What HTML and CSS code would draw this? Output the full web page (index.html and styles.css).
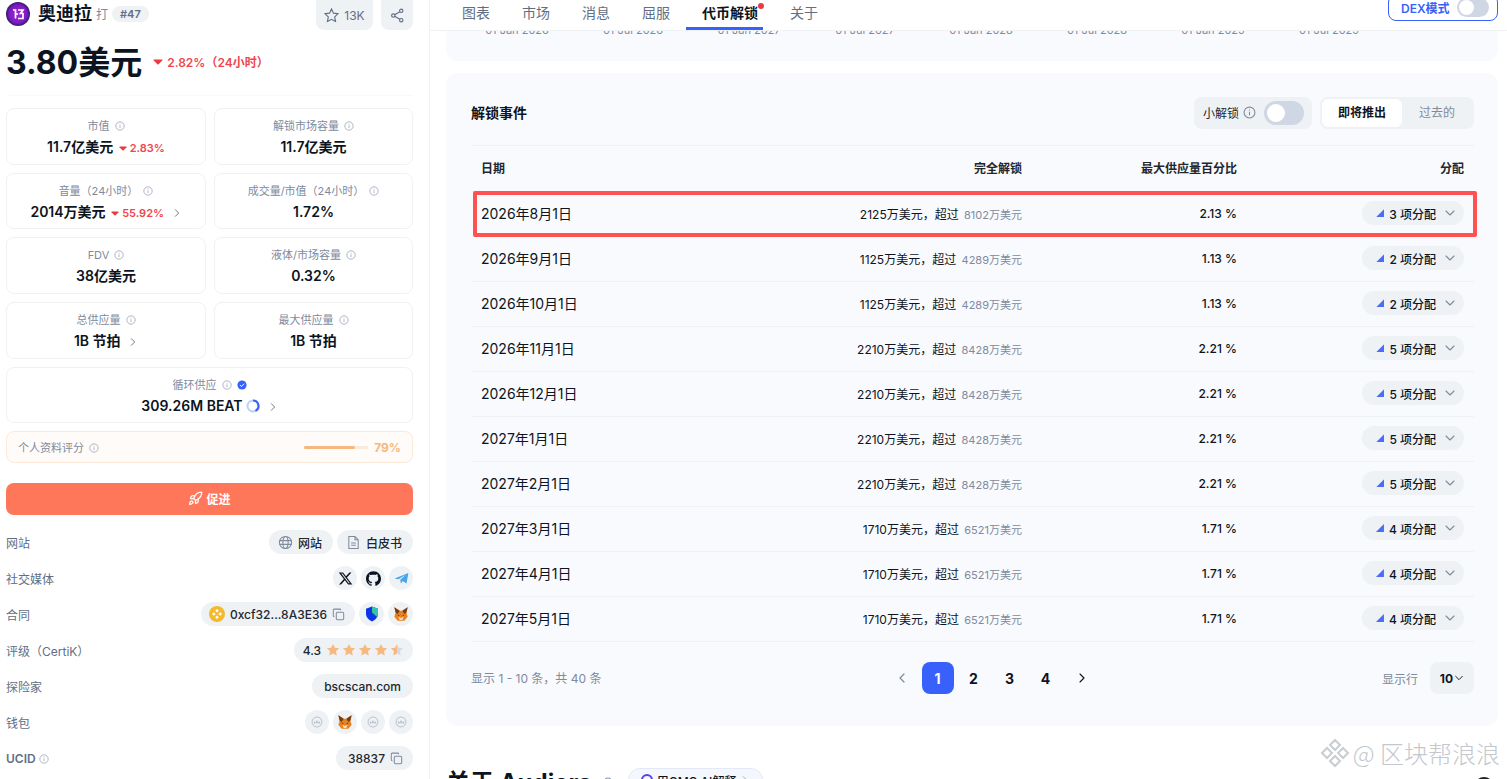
FILE: index.html
```html
<!DOCTYPE html>
<html lang="zh-CN">
<head>
<meta charset="utf-8">
<title>奥迪拉 代币解锁</title>
<link rel="stylesheet" href="styles.css">
</head>
<body>
<svg class="sprite" aria-hidden="true">
  <symbol id="i-info" viewBox="0 0 12 12"><circle cx="6" cy="6" r="5" fill="none" stroke="currentColor"/><path d="M6 5.2v3.4M6 3.2v1" fill="none" stroke="currentColor"/></symbol>
  <symbol id="i-right" viewBox="0 0 12 12"><path d="M4 2l4 4-4 4" fill="none" stroke="currentColor" stroke-width="1.1" stroke-linecap="round" stroke-linejoin="round"/></symbol>
  <symbol id="i-left" viewBox="0 0 12 12"><path d="M8 2L4 6l4 4" fill="none" stroke="currentColor" stroke-width="1.2" stroke-linecap="round" stroke-linejoin="round"/></symbol>
  <symbol id="i-down" viewBox="0 0 12 12"><path d="M2 4l4 4 4-4" fill="none" stroke="currentColor" stroke-width="1.1" stroke-linecap="round" stroke-linejoin="round"/></symbol>
  <symbol id="i-tri" viewBox="0 0 10 6"><path d="M1 .5h8a.5.5 0 0 1 .4.8L5.4 5.4a.6.6 0 0 1-.8 0L.6 1.3A.5.5 0 0 1 1 .5z" fill="currentColor"/></symbol>
  <symbol id="i-copy" viewBox="0 0 14 14"><rect x="4.6" y="4.6" width="8" height="8" rx="1.2" fill="none" stroke="currentColor" stroke-width="1.1"/><path d="M9.4 2.4V2.2a1 1 0 0 0-1-1H2.4a1 1 0 0 0-1 1v6.2a1 1 0 0 0 1 1h.3" fill="none" stroke="currentColor" stroke-width="1.1"/></symbol>
  <symbol id="i-wallet" viewBox="0 0 16 16"><circle cx="8" cy="8" r="6.6" fill="none" stroke="currentColor" stroke-width=".9"/><path d="M4.6 10.2V7.6l2 2.2 1.5-3.5 1.5 3.5 1.9-2.2v2.6" fill="none" stroke="currentColor" stroke-width=".9"/></symbol>
  <symbol id="i-fox" viewBox="0 0 24 24"><path d="M2 2l8 5h4l8-5-2 8 2 6-5 6h-10l-5-6 2-6z" fill="#e8821e"/><path d="M2 2l8 5-3 5-3-2z" fill="#763d16"/><path d="M22 2l-8 5 3 5 3-2z" fill="#763d16"/><path d="M8 16l4 2 4-2-2 5h-4z" fill="#f5ddc8"/><path d="M7 13l3 1-2 1zM17 13l-3 1 2 1z" fill="#233447"/></symbol>
  <symbol id="i-star" viewBox="0 0 16 16"><path d="M8 1l2.1 4.5 4.9.6-3.6 3.4.9 4.9L8 12.1l-4.3 2.3.9-4.9L1 6.1l4.9-.6z"/></symbol>
</svg>

<aside class="side">
  <header class="coin-head">
    <svg class="coin-logo" viewBox="0 0 24 24"><defs><radialGradient id="lg"><stop offset="0" stop-color="#a722dc"/><stop offset=".75" stop-color="#7a1cc0"/><stop offset="1" stop-color="#2f1a66"/></radialGradient></defs><circle cx="12" cy="12" r="12" fill="url(#lg)"/><path d="M7 8h2.500v8.500M12 8h5l-2.500 3.500h2.500v5h-5M9.500 12h2.500" fill="none" stroke="#fff" stroke-width="1.700"/></svg>
    <span class="coin-name">奥迪拉</span>
    <span class="coin-sym">打</span>
    <span class="coin-rank">#47</span>
    <span class="head-actions">
      <span class="square-btn wide"><svg class="ic14" viewBox="0 0 16 16"><use href="#i-star" fill="none" stroke="currentColor" stroke-width="1.200"/></svg>13K</span>
      <span class="square-btn"><svg class="ic14" viewBox="0 0 16 16"><circle cx="12" cy="3" r="1.800" fill="none" stroke="currentColor" stroke-width="1.200"/><circle cx="3.500" cy="8" r="1.800" fill="none" stroke="currentColor" stroke-width="1.200"/><circle cx="12" cy="13" r="1.800" fill="none" stroke="currentColor" stroke-width="1.200"/><path d="M5 7.100l5.500-3.200M5 8.900l5.500 3.200" stroke="currentColor" stroke-width="1.200"/></svg></span>
    </span>
  </header>

  <div class="price-row">
    <span class="price">3.80美元</span>
    <svg class="tri" viewBox="0 0 10 6"><use href="#i-tri"/></svg>
    <span class="price-change">2.82%（24小时）</span>
  </div>

  <div class="stats">
    <div class="stat"><div class="stat-label">市值 <svg class="ic10"><use href="#i-info"/></svg></div><div class="stat-value">11.7亿美元 <svg class="tri-sm" viewBox="0 0 10 6"><use href="#i-tri"/></svg><span class="neg">2.83%</span></div></div>
    <div class="stat"><div class="stat-label">解锁市场容量 <svg class="ic10"><use href="#i-info"/></svg></div><div class="stat-value">11.7亿美元</div></div>
    <div class="stat"><div class="stat-label">音量（24小时） <svg class="ic10"><use href="#i-info"/></svg></div><div class="stat-value">2014万美元 <svg class="tri-sm" viewBox="0 0 10 6"><use href="#i-tri"/></svg><span class="neg">55.92%</span> <svg class="ic10 chev"><use href="#i-right"/></svg></div></div>
    <div class="stat"><div class="stat-label">成交量/市值（24小时） <svg class="ic10"><use href="#i-info"/></svg></div><div class="stat-value">1.72%</div></div>
    <div class="stat"><div class="stat-label">FDV <svg class="ic10"><use href="#i-info"/></svg></div><div class="stat-value">38亿美元</div></div>
    <div class="stat"><div class="stat-label">液体/市场容量 <svg class="ic10"><use href="#i-info"/></svg></div><div class="stat-value">0.32%</div></div>
    <div class="stat"><div class="stat-label">总供应量 <svg class="ic10"><use href="#i-info"/></svg></div><div class="stat-value">1B 节拍 <svg class="ic10 chev"><use href="#i-right"/></svg></div></div>
    <div class="stat"><div class="stat-label">最大供应量 <svg class="ic10"><use href="#i-info"/></svg></div><div class="stat-value">1B 节拍</div></div>
    <div class="stat span2"><div class="stat-label">循环供应 <svg class="ic10"><use href="#i-info"/></svg> <svg class="ic10" viewBox="0 0 12 12"><circle cx="6" cy="6" r="5.500" fill="#3861fb"/><path d="M3.500 6l1.800 1.800 3.200-3.300" fill="none" stroke="#fff" stroke-width="1.200"/></svg></div><div class="stat-value">309.26M BEAT <svg class="ring" viewBox="0 0 14 14"><circle cx="7" cy="7" r="5.500" fill="none" stroke="#bcd0fb" stroke-width="2"/><path d="M7 1.500A5.500 5.500 0 0 1 9.500 11.900" fill="none" stroke="#3861fb" stroke-width="2"/></svg> <svg class="ic10 chev"><use href="#i-right"/></svg></div></div>
  </div>

  <div class="score">
    <span class="score-label">个人资料评分 <svg class="ic10"><use href="#i-info"/></svg></span>
    <span class="score-bar"><span class="score-fill"></span></span>
    <span class="score-val">79%</span>
  </div>

  <button class="boost"><svg class="ic14" viewBox="0 0 24 24" fill="none" stroke="#fff" stroke-width="2" stroke-linecap="round" stroke-linejoin="round"><path d="M4.500 16.500c-1.500 1.260-2 5-2 5s3.740-.5 5-2c.71-.84.700-2.130-.09-2.910a2.180 2.180 0 0 0-2.910-.09z"/><path d="M12 15l-3-3a22 22 0 0 1 2-3.950A12.880 12.880 0 0 1 22 2c0 2.720-.78 7.500-6 11a22.350 22.350 0 0 1-4 2z"/><path d="M9 12H4s.55-3.030 2-4c1.620-1.080 5 0 5 0M12 15v5s3.030-.55 4-2c1.080-1.620 0-5 0-5"/></svg>促进</button>

  <dl class="info">
    <div class="info-row"><dt>网站</dt><dd><span class="pill icon-pill"><svg class="ic15" viewBox="0 0 16 16" fill="none" stroke="#808a9d" stroke-width="1.100"><circle cx="8" cy="8" r="6.500"/><ellipse cx="8" cy="8" rx="2.800" ry="6.500"/><path d="M1.500 6h13M1.500 10h13"/></svg>网站</span><span class="pill icon-pill"><svg class="ic15" viewBox="0 0 16 16" fill="none" stroke="#808a9d" stroke-width="1.100"><path d="M3 1.500h6.500L13 5v9.500H3zM9.500 1.500V5H13M5.500 8.500h5M5.500 11h5"/></svg>白皮书</span></dd></div>
    <div class="info-row"><dt>社交媒体</dt><dd>
      <span class="round"><svg class="ic14" viewBox="0 0 24 24"><path fill="#0d1421" d="M18.244 2.250h3.308l-7.227 8.260 8.502 11.240H16.170l-5.214-6.817L4.990 21.750H1.680l7.730-8.835L1.254 2.250H8.080l4.713 6.231zm-1.161 17.520h1.833L7.084 4.126H5.117z"/></svg></span>
      <span class="round"><svg class="ic14" viewBox="0 0 24 24"><path fill="#0d1421" d="M12 .297c-6.630 0-12 5.373-12 12 0 5.303 3.438 9.800 8.205 11.385.6.113.82-.258.82-.577 0-.285-.01-1.040-.015-2.040-3.338.724-4.042-1.610-4.042-1.610C4.422 18.070 3.633 17.700 3.633 17.700c-1.087-.744.084-.729.084-.729 1.205.084 1.838 1.236 1.838 1.236 1.070 1.835 2.809 1.305 3.495.998.108-.776.417-1.305.76-1.605-2.665-.3-5.466-1.332-5.466-5.930 0-1.310.465-2.380 1.235-3.220-.135-.303-.54-1.523.105-3.176 0 0 1.005-.322 3.300 1.230.96-.267 1.980-.399 3-.405 1.020.006 2.040.138 3 .405 2.280-1.552 3.285-1.230 3.285-1.230.645 1.653.24 2.873.12 3.176.765.84 1.230 1.910 1.230 3.220 0 4.610-2.805 5.625-5.475 5.920.42.36.81 1.096.81 2.220 0 1.606-.015 2.896-.015 3.286 0 .315.21.69.825.57C20.565 22.092 24 17.592 24 12.297c0-6.627-5.373-12-12-12"/></svg></span>
      <span class="round"><svg class="ic14" viewBox="0 0 24 24"><path fill="#44a5ec" d="M1 12L23 3l-3 17-6-4-3 4-1-6 9-8-12 7z"/></svg></span>
    </dd></div>
    <div class="info-row"><dt>合同</dt><dd class="contract">
      <span class="pill addr"><svg class="ic16" viewBox="0 0 16 16"><circle cx="8" cy="8" r="8" fill="#f3ba2f"/><path d="M8 3l1.800 1.800L8 6.600 6.200 4.800zM4.800 6.200L6.600 8 4.800 9.800 3 8zM11.200 6.200L13 8l-1.800 1.800L9.400 8zM8 9.400l1.800 1.800L8 13l-1.800-1.800z" fill="#fff"/></svg>0xcf32...8A3E36<svg class="ic13 muted" viewBox="0 0 14 14"><use href="#i-copy"/></svg></span>
      <span class="round"><svg class="ic16" viewBox="0 0 16 16"><path d="M8 .5l6 2.200v5c0 3.500-2.500 6-6 7.800-3.500-1.800-6-4.300-6-7.800v-5z" fill="#0c35e8"/><path d="M8 .5l6 2.200v5c0 1.200-.3 2.300-.9 3.300L8 6.500z" fill="#35c4a5"/></svg></span>
      <span class="round"><svg class="ic16" viewBox="0 0 24 24"><use href="#i-fox"/></svg></span>
    </dd></div>
    <div class="info-row"><dt>评级（CertiK）</dt><dd><span class="pill rating">4.3 <span class="stars"><svg class="star"><use href="#i-star"/></svg><svg class="star"><use href="#i-star"/></svg><svg class="star"><use href="#i-star"/></svg><svg class="star"><use href="#i-star"/></svg><svg class="star half" viewBox="0 0 16 16"><defs><linearGradient id="hf"><stop offset=".5" stop-color="#f6b87e"/><stop offset=".5" stop-color="#d5dbe5"/></linearGradient></defs><path fill="url(#hf)" d="M8 1l2.100 4.500 4.900.6-3.600 3.400.9 4.900L8 12.100l-4.300 2.300.9-4.900L1 6.100l4.900-.6z"/></svg></span></span></dd></div>
    <div class="info-row"><dt>探险家</dt><dd><span class="pill link">bscscan.com</span></dd></div>
    <div class="info-row"><dt>钱包</dt><dd>
      <span class="round light"><svg class="ic12"><use href="#i-wallet"/></svg></span>
      <span class="round"><svg class="ic16" viewBox="0 0 24 24"><use href="#i-fox"/></svg></span>
      <span class="round light"><svg class="ic12"><use href="#i-wallet"/></svg></span>
      <span class="round light"><svg class="ic12"><use href="#i-wallet"/></svg></span>
    </dd></div>
    <div class="info-row"><dt class="ucid">UCID <svg class="ic10"><use href="#i-info"/></svg></dt><dd><span class="pill link">38837<svg class="ic13 muted tail" viewBox="0 0 14 14"><use href="#i-copy"/></svg></span></dd></div>
  </dl>
</aside>

<main class="main">
  <nav class="tabs">
    <a class="tab">图表</a>
    <a class="tab">市场</a>
    <a class="tab">消息</a>
    <a class="tab">屈服</a>
    <a class="tab active">代币解锁<i class="dot"></i></a>
    <a class="tab">关于</a>
    <span class="dex"><span class="dex-label">DEX模式</span><span class="toggle small"><i></i></span></span>
  </nav>

  <section class="card chart-card">
    <div class="axis">
      <span>01 Jan 2026</span><span>01 Jul 2026</span><span>01 Jan 2027</span><span>01 Jul 2027</span><span>01 Jan 2028</span><span>01 Jul 2028</span><span>01 Jan 2029</span><span>01 Jul 2029</span>
    </div>
  </section>

  <section class="card events">
    <div class="events-head">
      <h2 class="events-title">解锁事件</h2>
      <div class="mini-unlock">小解锁 <svg class="ic13 muted"><use href="#i-info"/></svg><span class="toggle"><i></i></span></div>
      <div class="segment"><span class="seg on">即将推出</span><span class="seg">过去的</span></div>
    </div>

    <div class="table">
      <div class="tr th"><span>日期</span><span class="r col-unlock">完全解锁</span><span class="r">最大供应量百分比</span><span class="r">分配</span></div>
      <div class="tr hl"><span class="date">2026年8月1日</span><span class="r col-unlock">2125万美元，超过 <em>8102万美元</em></span><span class="r pct">2.13 %</span><span class="r"><span class="alloc"><i class="wedge"></i>3 项分配<svg class="ic12 muted"><use href="#i-down"/></svg></span></span></div>
      <div class="tr"><span class="date">2026年9月1日</span><span class="r col-unlock">1125万美元，超过 <em>4289万美元</em></span><span class="r pct">1.13 %</span><span class="r"><span class="alloc"><i class="wedge"></i>2 项分配<svg class="ic12 muted"><use href="#i-down"/></svg></span></span></div>
      <div class="tr"><span class="date">2026年10月1日</span><span class="r col-unlock">1125万美元，超过 <em>4289万美元</em></span><span class="r pct">1.13 %</span><span class="r"><span class="alloc"><i class="wedge"></i>2 项分配<svg class="ic12 muted"><use href="#i-down"/></svg></span></span></div>
      <div class="tr"><span class="date">2026年11月1日</span><span class="r col-unlock">2210万美元，超过 <em>8428万美元</em></span><span class="r pct">2.21 %</span><span class="r"><span class="alloc"><i class="wedge"></i>5 项分配<svg class="ic12 muted"><use href="#i-down"/></svg></span></span></div>
      <div class="tr"><span class="date">2026年12月1日</span><span class="r col-unlock">2210万美元，超过 <em>8428万美元</em></span><span class="r pct">2.21 %</span><span class="r"><span class="alloc"><i class="wedge"></i>5 项分配<svg class="ic12 muted"><use href="#i-down"/></svg></span></span></div>
      <div class="tr"><span class="date">2027年1月1日</span><span class="r col-unlock">2210万美元，超过 <em>8428万美元</em></span><span class="r pct">2.21 %</span><span class="r"><span class="alloc"><i class="wedge"></i>5 项分配<svg class="ic12 muted"><use href="#i-down"/></svg></span></span></div>
      <div class="tr"><span class="date">2027年2月1日</span><span class="r col-unlock">2210万美元，超过 <em>8428万美元</em></span><span class="r pct">2.21 %</span><span class="r"><span class="alloc"><i class="wedge"></i>5 项分配<svg class="ic12 muted"><use href="#i-down"/></svg></span></span></div>
      <div class="tr"><span class="date">2027年3月1日</span><span class="r col-unlock">1710万美元，超过 <em>6521万美元</em></span><span class="r pct">1.71 %</span><span class="r"><span class="alloc"><i class="wedge"></i>4 项分配<svg class="ic12 muted"><use href="#i-down"/></svg></span></span></div>
      <div class="tr"><span class="date">2027年4月1日</span><span class="r col-unlock">1710万美元，超过 <em>6521万美元</em></span><span class="r pct">1.71 %</span><span class="r"><span class="alloc"><i class="wedge"></i>4 项分配<svg class="ic12 muted"><use href="#i-down"/></svg></span></span></div>
      <div class="tr"><span class="date">2027年5月1日</span><span class="r col-unlock">1710万美元，超过 <em>6521万美元</em></span><span class="r pct">1.71 %</span><span class="r"><span class="alloc"><i class="wedge"></i>4 项分配<svg class="ic12 muted"><use href="#i-down"/></svg></span></span></div>
    </div>

    <footer class="pager-row">
      <span class="count">显示 1 - 10 条，共 40 条</span>
      <div class="pager">
        <span class="pg arrow off"><svg class="ic12"><use href="#i-left"/></svg></span>
        <span class="pg cur">1</span><span class="pg">2</span><span class="pg">3</span><span class="pg">4</span>
        <span class="pg arrow"><svg class="ic12"><use href="#i-right"/></svg></span>
      </div>
      <div class="per-page">显示行 <span class="select">10<svg class="ic10"><use href="#i-down"/></svg></span></div>
    </footer>
  </section>

  <section class="about">
    <h2 class="about-title">关于 Audiera</h2>
    <svg class="ic12 muted"><use href="#i-info"/></svg>
    <span class="ai-chip"><i class="ai-ring"></i>用CMC AI解释 <svg class="ic10"><use href="#i-right"/></svg></span>
    <i class="corner"></i>
  </section>
</main>

<div class="watermark">
  <svg class="wm-logo" viewBox="0 0 30 30" fill="none" stroke="#c9cdd2" stroke-width="2"><path d="M15 2l5 5-5 5-5-5zM7 10l5 5-5 5-5-5zM23 10l5 5-5 5-5-5zM15 18l5 5-5 5-5-5z"/></svg>
  <span>@ 区块帮浪浪</span>
</div>
</body>
</html>
```
FILE: styles.css
```css
* { box-sizing: border-box; }
html, body { margin: 0; height: 779px; overflow: hidden; }
body {
  position: relative;
  display: flex;
  width: 1507px;
  background: #fff;
  color: #0d1421;
  font-family: Inter, "Noto Sans CJK SC", "Liberation Sans", sans-serif;
  font-size: 12px;
}
.sprite { display: none; }
svg { flex: none; vertical-align: -1px; }
.ic10 { width: 10px; height: 10px; color: #a1a7bb; }
.ic12 { width: 12px; height: 12px; }
.ic13 { width: 13px; height: 13px; }
.ic14 { width: 15px; height: 15px; }
.ic15 { width: 15px; height: 15px; }
.ic16 { width: 16px; height: 16px; }
.muted { color: #808a9d; }
.chev { color: #616e85; margin-left: 4px; }

/* sidebar */
.side {
  width: 430px;
  flex: none;
  padding: 0 16px 0 6px;
  border-right: 1px solid #eff2f5;
}
.coin-head { display: flex; align-items: center; height: 30px; }
.coin-logo { width: 24px; height: 24px; margin: -3px 8px 0 0; }
.coin-name { font-size: 18px; line-height: 24px; font-weight: 600; margin-top: -3px; }
.coin-sym { margin: -3px 4px 0 4px; font-size: 12px; color: #808a9d; }
.coin-rank { margin-top: -3px; padding: 0 8px; height: 16px; line-height: 16px; border-radius: 8px; background: #eff2f5; color: #616e85; font-size: 11px; font-weight: 600; }
.head-actions { display: flex; gap: 8px; margin-left: auto; align-self: flex-start; }
.square-btn { display: flex; align-items: center; justify-content: center; gap: 5px; width: 32px; height: 30px; border-radius: 0 0 8px 8px; background: #eff2f5; color: #616e85; font-size: 12px; }
.square-btn.wide { width: 57px; }

.price-row { display: flex; align-items: center; height: 66px; padding-top: 1px; border-bottom: 1px dotted #f3f4f7; }
.price { font-size: 32px; font-weight: 700; line-height: 40px; margin-right: 11px; }
.tri { width: 10px; height: 6px; color: #ea3943; margin: -2px 4px 0 0; }
.price-change { margin-top: -4px; font-size: 12px; font-weight: 600; color: #f0464e; }
.tri-sm { width: 8px; height: 5px; color: #ea3943; margin: 0 3px 2px 2px; }
.neg { color: #f0464e; font-size: 11px; font-weight: 600; }

.stats { display: grid; grid-template-columns: 200px 199px; gap: 8px; margin-top: 12px; }
.stat { height: 56.7px; padding-top: 9px; border: 1px solid #eff2f5; border-radius: 8px; text-align: center; }
.stat.span2 { grid-column: span 2; }
.stat-label { font-size: 11px; line-height: 16px; color: #808a9d; }
.stat-label .ic10 { margin-left: 2px; }
.stat-value { margin-top: 3px; font-size: 14px; line-height: 20px; font-weight: 600; white-space: nowrap; }
.ring { width: 14px; height: 14px; vertical-align: -2px; }

.score { display: flex; align-items: center; height: 32px; margin-top: 8px; padding: 0 11px; border: 1px solid #fde9d8; border-radius: 8px; background: #fffbf8; }
.score-label { font-size: 11px; color: #808a9d; }
.score-label .ic10 { margin-left: 2px; }
.score-bar { width: 64px; height: 3px; margin-left: auto; border-radius: 2px; background: #f8ebde; }
.score-fill { display: block; width: 80%; height: 3px; border-radius: 2px; background: #f6b87e; }
.score-val { width: 33px; text-align: right; font-size: 12px; font-weight: 700; color: #f6b87e; }

.boost { display: flex; align-items: center; justify-content: center; gap: 3px; width: 100%; height: 32px; margin-top: 20px; padding: 0 0 2px; border: 0; border-radius: 8px; background: #ff775a; color: #fff; font: inherit; font-weight: 700; }

.info { margin: 15px 0 0; }
.info-row { display: flex; align-items: center; justify-content: space-between; height: 24px; margin-bottom: 12px; }
.info-row dt { font-size: 12px; color: #616e85; }
.info-row dt.ucid { font-weight: 600; }
.info-row dd { display: flex; gap: 4px; margin: 0; }
.info-row dd.contract { gap: 4.400px; }
.contract .round { width: 24.600px; }
.pill { display: flex; align-items: center; gap: 4px; height: 24px; padding: 0 8px; border-radius: 12px; background: #eff2f5; font-size: 12px; font-weight: 500; color: #22262e; white-space: nowrap; }
.pill.icon-pill { gap: 5px; padding: 0 11px 0 9px; }
.pill.addr { gap: 5px; padding: 0 10px 0 8px; }
.pill.link { padding: 0 12px; }
.pill .tail { margin: 0 -2px 0 1px; }
.pill.rating { padding: 0 9px; gap: 5px; }
.round { display: flex; align-items: center; justify-content: center; width: 24px; height: 24px; border-radius: 50%; background: #eff2f5; }
.round.light { color: #a1a7bb; }
.stars { display: flex; gap: 2px; }
.star { width: 14px; height: 14px; fill: #f6b87e; }

/* main */
.main { position: relative; flex: 1; min-width: 0; padding: 0 9px 0 16px; }
.tabs { position: relative; z-index: 2; display: flex; height: 31px; margin: 0 -9px 0 -16px; padding-left: 16px; border-bottom: 1px solid #eff2f5; background: #fff; }
.tab { position: relative; height: 30px; padding: 0 16px; line-height: 26px; font-size: 14px; color: #616e85; }
.tab.active { font-weight: 600; color: #0d1421; }
.tab.active::after { content: ""; position: absolute; left: 0; bottom: 0; width: 77px; height: 3px; background: #3861fb; }
.dot { position: absolute; top: 3px; right: 10px; width: 6px; height: 6px; border-radius: 50%; background: #ea3943; }
.dex { display: flex; align-items: center; gap: 7px; position: absolute; right: 9px; top: -6px; width: 110px; height: 27px; padding: 0 8px 0 12px; border: 1px solid #3861fb; border-radius: 8px; background: #fff; color: #3861fb; font-size: 12px; font-weight: 600; white-space: nowrap; }
.toggle { display: inline-flex; flex: none; align-items: center; width: 40px; height: 24px; padding: 3px; border-radius: 12px; background: #cfd6e4; }
.toggle i { width: 18px; height: 18px; border-radius: 50%; background: #fff; }
.toggle.small { width: 32px; height: 19px; padding: 2px; border-radius: 10px; }
.toggle.small i { width: 15px; height: 15px; }

.card { border-radius: 12px; background: #f8fafd; }
.chart-card { height: 30px; overflow: hidden; border-radius: 0 0 12px 12px; }
.axis { display: flex; gap: 52px; margin-top: -8px; padding-left: 39px; font-size: 11px; line-height: 14px; color: #808a9d; white-space: nowrap; }
.axis span { width: 64px; text-align: center; }
.events { height: 653px; margin-top: 12px; padding: 0 24px 0 25px; }
.events-head { display: flex; align-items: center; height: 73px; padding-top: 7px; border-bottom: 1px solid #eff2f5; }
.events-title { margin: -2px auto 0 0; font-size: 14px; font-weight: 600; }
.mini-unlock { display: flex; align-items: center; gap: 3px; height: 32px; padding: 0 8px 0 9px; border-radius: 8px; background: #eff2f5; color: #22262e; }
.mini-unlock svg { margin-left: 1px; }
.mini-unlock .toggle { margin-left: 5px; }
.segment { display: flex; height: 32px; margin-left: 8px; padding: 2px; border-radius: 8px; background: #eff2f5; }
.seg { width: 70px; line-height: 28px; text-align: center; color: #808a9d; }
.seg.on { width: 80px; border-radius: 6px; background: #fff; color: #0d1421; font-weight: 600; }

.tr { display: grid; grid-template-columns: 200px 1fr 215px 227px; align-items: center; height: 45px; padding: 0 0 2px 10px; border-bottom: 1px solid #eff2f5; }
.tr > .r { padding-right: 10px; text-align: right; }
.tr.th { height: 46px; padding-bottom: 3px; font-weight: 600; color: #22262e; }
.th .col-unlock { font-weight: 600; }
.hl { position: relative; }
.hl::after { content: ""; position: absolute; inset: -1px -3px -1px 2px; border: 4px solid #fe5252; border-radius: 2px; }
.date { font-size: 14px; }
.col-unlock { font-weight: 400; white-space: nowrap; }
.col-unlock em { font-style: normal; font-weight: 400; font-size: 11px; color: #808a9d; margin-left: 2px; }
.pct { font-weight: 500; }
.alloc { display: inline-flex; align-items: center; gap: 5px; height: 24px; padding: 0 8px 0 14px; border-radius: 12px; background: #eff2f5; font-weight: 500; vertical-align: middle; }
.alloc svg { margin-left: 3px; }
.wedge { width: 8px; height: 8px; background: #4b6cf6; clip-path: polygon(100% 0, 100% 100%, 0 100%); }

.pager-row { display: grid; grid-template-columns: 1fr auto 1fr; align-items: center; height: 72px; color: #808a9d; }
.count { margin-top: -2px; }
.pager { display: flex; gap: 4px; margin-left: 38px; }
.pg { display: flex; align-items: center; justify-content: center; width: 32px; height: 32px; border-radius: 8px; color: #0d1421; font-size: 14px; font-weight: 700; }
.pg.cur { background: #3861fb; color: #fff; }
.pg.off { color: #808a9d; }
.per-page { display: flex; align-items: center; justify-content: flex-end; gap: 12px; }
.select { display: flex; align-items: center; justify-content: center; gap: 1px; width: 44px; height: 32px; border-radius: 8px; background: #eff2f5; color: #0d1421; font-weight: 700; }
.select .ic10 { color: #0d1421; }

.about { display: flex; align-items: center; gap: 10px; height: 32px; margin-top: 41px; }
.about-title { margin: 0; font-size: 24px; line-height: 32px; font-weight: 700; white-space: nowrap; }
.ai-chip { display: flex; align-items: center; gap: 4px; height: 24px; margin: -6px 0 0 4px; padding: 0 12px; border: 1px solid #e3e9fb; border-radius: 12px; background: #f5f7fe; font-weight: 500; white-space: nowrap; }
.ai-ring { width: 12px; height: 12px; border: 2px solid #5b3df5; border-radius: 50%; }
.corner { position: absolute; right: 13px; top: 777px; width: 20px; height: 20px; border-radius: 50%; background: #222; }

.watermark { position: absolute; z-index: 3; right: 7px; top: 738px; display: flex; align-items: center; gap: 3px; font-family: "Noto Sans CJK SC", sans-serif; font-size: 24px; line-height: 28px; font-weight: 300; color: #c4c8ce; white-space: nowrap; }
.wm-logo { width: 30px; height: 30px; }
```
